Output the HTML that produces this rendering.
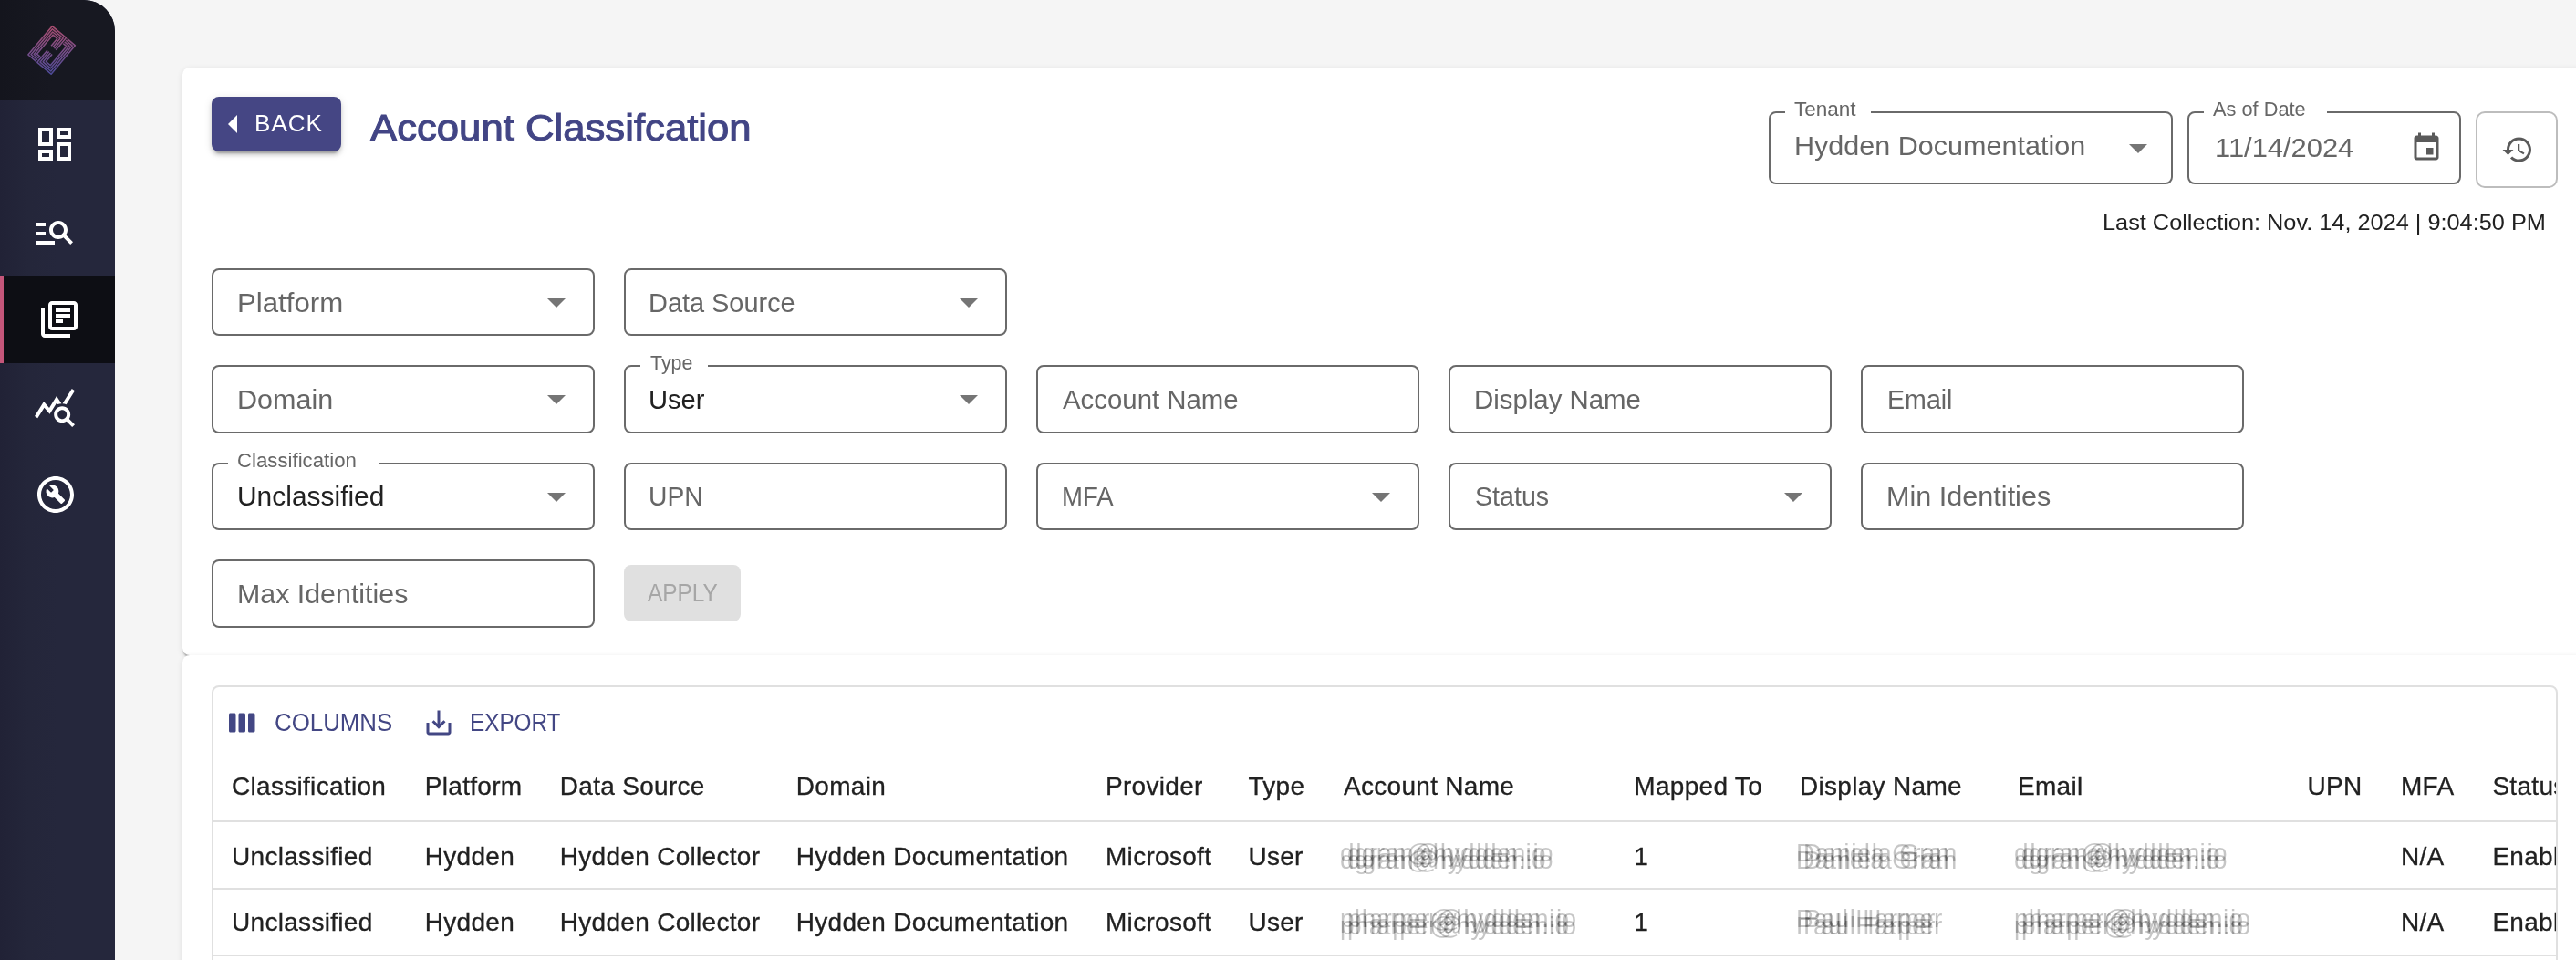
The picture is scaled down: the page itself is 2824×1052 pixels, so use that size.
<!DOCTYPE html>
<html lang="en">
<head>
<meta charset="utf-8">
<title>Account Classifcation</title>
<style>
*{box-sizing:border-box;margin:0;padding:0}
html,body{width:2824px;height:1052px;overflow:hidden;background:#f5f5f5;font-family:"Liberation Sans",sans-serif}
body{position:relative}
#wrap{position:absolute;left:0;top:0;width:2824px;height:1052px;will-change:transform}
.abs{position:absolute}
#side{position:absolute;left:0;top:0;width:126px;height:1052px;background:linear-gradient(90deg,#212236 0,#24263a 25%,#25273c 50%);border-top-right-radius:34px;overflow:hidden}
#logo{position:absolute;left:0;top:0;width:126px;height:110px;background:linear-gradient(90deg,#14151d 0,#171821 45%)}
#active{position:absolute;left:0;top:302px;width:126px;height:96px;background:#0d0e14;border-left:4px solid #c4567a}
.ico{position:absolute;width:48px;height:48px;fill:#fff}
.card{position:absolute;background:#fff;box-shadow:0 4px 2px -2px rgba(0,0,0,.2),0 2px 2px 0 rgba(0,0,0,.14),0 2px 6px 0 rgba(0,0,0,.12)}
#card1{left:200px;top:74px;width:2700px;height:644px;border-radius:8px}
#card2{left:200px;top:718px;width:2700px;height:400px;border-radius:8px}
.os{font-family:"Liberation Sans",sans-serif;white-space:pre;position:absolute;line-height:1;transform-origin:0 50%}
.fld{position:absolute;border:2px solid #6a6a6a;border-radius:8px}
.notch{position:absolute;top:-2px;height:2px;background:#fff}
.arr{position:absolute;width:48px;height:48px;fill:#757575}
#grid{position:absolute;left:232px;top:751px;width:2572px;height:400px;border:2px solid #e0e0e0;border-radius:8px;overflow:hidden}
.tc{position:absolute;font-size:28px;line-height:28px;color:#212121;letter-spacing:.3px;white-space:pre;-webkit-text-stroke:.3px #212121}
.hl{position:absolute;left:0;width:2572px;height:2px;background:#e0e0e0}
.blur{color:transparent;-webkit-text-stroke:0 transparent;text-shadow:-4px -4px 0 rgba(0,0,0,.225),4px -4px 0 rgba(0,0,0,.225),-4px 4px 0 rgba(0,0,0,.225),4px 4px 0 rgba(0,0,0,.225)}
</style>
</head>
<body>
<div id="wrap">
<div id="side">
<div id="logo"></div>
<div id="active"></div>
<svg class="abs" style="left:0;top:0" width="126" height="110" viewBox="0 0 126 110">
<defs><linearGradient id="lg" gradientUnits="userSpaceOnUse" x1="0" y1="0" x2="34.8" y2="41.4"><stop offset="0" stop-color="#cb587f"/><stop offset=".5" stop-color="#915a9f"/><stop offset="1" stop-color="#5755b2"/></linearGradient></defs>
<g transform="translate(57.1 27.9) rotate(40)" fill="none" stroke="url(#lg)" stroke-width="1.55" stroke-opacity=".82" stroke-linejoin="round">
<path d="M12.00 41.45 L0.55 41.45 L0.55 0.55 L20.45 0.55 L20.45 17.80"/>
<path d="M12.00 39.20 L2.80 39.20 L2.80 2.80 L18.20 2.80 L18.20 17.80"/>
<path d="M12.00 36.95 L5.05 36.95 L5.05 5.05 L15.95 5.05 L15.95 17.80"/>
<path d="M12.00 34.70 L7.30 34.70 L7.30 7.30 L13.70 7.30 L13.70 17.80"/>
<path d="M22.00 0.55 L33.45 0.55 L33.45 41.45 L13.55 41.45 L13.55 24.20"/>
<path d="M22.00 2.80 L31.20 2.80 L31.20 39.20 L15.80 39.20 L15.80 24.20"/>
<path d="M22.00 5.05 L28.95 5.05 L28.95 36.95 L18.05 36.95 L18.05 24.20"/>
<path d="M22.00 7.30 L26.70 7.30 L26.70 34.70 L20.30 34.70 L20.30 24.20"/>
</g></svg>
<svg class="ico" style="left:36px;top:134px" viewBox="0 0 24 24"><path d="M19 5v2h-4V5h4M9 5v6H5V5h4m10 8v6h-4v-6h4M9 17v2H5v-2h4M21 3h-8v6h8V3zM11 3H3v10h8V3zm10 8h-8v10h8V11zm-10 4H3v6h8v-6z"/></svg>
<svg class="ico" style="left:36px;top:230px" viewBox="0 0 24 24"><path d="M7 9H2V7h5v2zm0 3H2v2h5v-2zm13.59 7-3.83-3.83c-.8.52-1.74.83-2.76.83-2.76 0-5-2.24-5-5s2.24-5 5-5 5 2.24 5 5c0 1.02-.31 1.96-.83 2.75L22 17.59 20.59 19zM17 11c0-1.65-1.35-3-3-3s-3 1.35-3 3 1.35 3 3 3 3-1.35 3-3zM2 19h10v-2H2v2z"/></svg>
<svg class="ico" style="left:41px;top:326px" viewBox="0 0 24 24"><path d="M4 6H2v14c0 1.1.9 2 2 2h14v-2H4V6zm16-4H8c-1.1 0-2 .9-2 2v12c0 1.1.9 2 2 2h12c1.1 0 2-.9 2-2V4c0-1.1-.9-2-2-2zm0 14H8V4h12v12zM10 9h8v2h-8zm0 3h4v2h-4zm0-6h8v2h-8z"/></svg>
<svg class="ico" style="left:36px;top:422px" viewBox="0 0 24 24"><path d="M19.88 18.47c.44-.7.7-1.51.7-2.39 0-2.49-2.01-4.5-4.5-4.5s-4.5 2.01-4.5 4.5 2.01 4.5 4.49 4.5c.88 0 1.7-.26 2.39-.7L21.58 23 23 21.58l-3.12-3.11zm-3.8.11c-1.38 0-2.5-1.12-2.5-2.5s1.12-2.5 2.5-2.5 2.5 1.12 2.5 2.5-1.12 2.5-2.5 2.5zm-.36-8.5c-.74.02-1.45.18-2.1.45l-.55-.83-3.8 6.18-3.01-3.52-3.63 5.81L1 17l5-8 3 3.5L13 6l2.72 4.08zm2.59.5c-.64-.28-1.33-.45-2.05-.49L21.38 2 23 3.18l-4.69 7.4z"/></svg>
<svg class="ico" style="left:37px;top:518px" viewBox="0 0 24 24"><path d="M12 2C6.48 2 2 6.48 2 12s4.48 10 10 10 10-4.48 10-10S17.52 2 12 2zm0 18c-4.41 0-8-3.59-8-8s3.59-8 8-8 8 3.59 8 8-3.59 8-8 8zM13.49 11.38c.43-1.22.17-2.64-.81-3.62-1.11-1.11-2.79-1.3-4.1-.59l2.35 2.35-1.41 1.41-2.35-2.35c-.71 1.32-.52 2.99.59 4.1.98.98 2.4 1.24 3.62.81l3.41 3.41c.2.2.51.2.71 0l1.4-1.4c.2-.2.2-.51 0-.71l-3.41-3.41z"/></svg>
</div>
<div class="card" id="card1"></div>
<div class="card" id="card2"></div>
<!-- header -->
<div class="abs" id="back" style="left:232px;top:106px;width:142px;height:60px;border-radius:8px;background:#454684;box-shadow:0 6px 2px -4px rgba(0,0,0,.2),0 4px 4px 0 rgba(0,0,0,.14),0 2px 10px 0 rgba(0,0,0,.12)">
<svg class="abs" style="left:0;top:6px;fill:#fff" width="48" height="48" viewBox="0 0 24 24"><path d="M14 7l-5 5 5 5V7z"/></svg>
<span class="os" style="left:47px;top:16px;font-size:26px;color:#fff;letter-spacing:1.05px">BACK</span>
</div>
<div class="fld" style="left:1939px;top:122px;width:443px;height:80px"><i class="notch" style="left:16.0px;width:94.0px"></i><svg class="arr" style="left:379px;top:14px" viewBox="0 0 24 24"><path d="M7 10l5 5 5-5z"/></svg></div>
<div class="fld" style="left:2398px;top:122px;width:300px;height:80px"><i class="notch" style="left:15.6px;width:135.6px"></i><svg class="abs" style="left:242px;top:20px;fill:#5a5a5a" width="36" height="36" viewBox="0 0 24 24"><path d="M17 12h-5v5h5v-5zM16 1v2H8V1H6v2H5c-1.11 0-1.99.9-1.99 2L3 19c0 1.1.89 2 2 2h14c1.1 0 2-.9 2-2V5c0-1.1-.9-2-2-2h-1V1h-2zm3 18H5V8h14v11z"/></svg></div>
<div class="abs" style="left:2714px;top:122px;width:90px;height:84px;border:2px solid #bdbdbd;border-radius:10px">
<svg class="abs" style="left:25.5px;top:22px;fill:#5a5a5a" width="36" height="36" viewBox="0 0 24 24"><path d="M13 3c-4.97 0-9 4.03-9 9H1l3.89 3.89.07.14L9 12H6c0-3.87 3.13-7 7-7s7 3.13 7 7-3.13 7-7 7c-1.93 0-3.68-.79-4.94-2.06l-1.42 1.42C8.27 19.99 10.51 21 13 21c4.97 0 9-4.03 9-9s-4.03-9-9-9zm-1 5v5l4.28 2.54.72-1.21-3.5-2.08V8H12z"/></svg>
</div>
<!-- filters -->
<div class="fld" style="left:232px;top:294px;width:420px;height:74px"><svg class="arr" style="left:352px;top:11px" viewBox="0 0 24 24"><path d="M7 10l5 5 5-5z"/></svg></div>
<div class="fld" style="left:684px;top:294px;width:420px;height:74px"><svg class="arr" style="left:352px;top:11px" viewBox="0 0 24 24"><path d="M7 10l5 5 5-5z"/></svg></div>
<div class="fld" style="left:232px;top:400px;width:420px;height:75px"><svg class="arr" style="left:352px;top:11px" viewBox="0 0 24 24"><path d="M7 10l5 5 5-5z"/></svg></div>
<div class="fld" style="left:684px;top:400px;width:420px;height:75px"><i class="notch" style="left:15.6px;width:74.0px"></i><svg class="arr" style="left:352px;top:11px" viewBox="0 0 24 24"><path d="M7 10l5 5 5-5z"/></svg></div>
<div class="fld" style="left:1136px;top:400px;width:420px;height:75px"></div>
<div class="fld" style="left:1588px;top:400px;width:420px;height:75px"></div>
<div class="fld" style="left:2040px;top:400px;width:420px;height:75px"></div>
<div class="fld" style="left:232px;top:507px;width:420px;height:74px"><i class="notch" style="left:15.9px;width:166.1px"></i><svg class="arr" style="left:352px;top:11px" viewBox="0 0 24 24"><path d="M7 10l5 5 5-5z"/></svg></div>
<div class="fld" style="left:684px;top:507px;width:420px;height:74px"></div>
<div class="fld" style="left:1136px;top:507px;width:420px;height:74px"><svg class="arr" style="left:352px;top:11px" viewBox="0 0 24 24"><path d="M7 10l5 5 5-5z"/></svg></div>
<div class="fld" style="left:1588px;top:507px;width:420px;height:74px"><svg class="arr" style="left:352px;top:11px" viewBox="0 0 24 24"><path d="M7 10l5 5 5-5z"/></svg></div>
<div class="fld" style="left:2040px;top:507px;width:420px;height:74px"></div>
<div class="fld" style="left:232px;top:613px;width:420px;height:74.5px"></div>
<div class="abs" id="apply" style="left:684px;top:619px;width:128px;height:62px;border-radius:8px;background:#e0e0e0"></div>
<!-- grid -->
<div id="grid">
<svg class="abs" style="left:14px;top:21px;fill:#434784" width="36" height="36" viewBox="0 0 24 24"><path d="M6 5H3c-.55 0-1 .45-1 1v12c0 .55.45 1 1 1h3c.55 0 1-.45 1-1V6c0-.55-.45-1-1-1zm14 0h-3c-.55 0-1 .45-1 1v12c0 .55.45 1 1 1h3c.55 0 1-.45 1-1V6c0-.55-.45-1-1-1zm-7 0h-3c-.55 0-1 .45-1 1v12c0 .55.45 1 1 1h3c.55 0 1-.45 1-1V6c0-.55-.45-1-1-1z"/></svg>
<svg class="abs" style="left:229px;top:21px;fill:#434784" width="36" height="36" viewBox="0 0 24 24"><path d="M19 12v7H5v-7H3v7c0 1.1.9 2 2 2h14c1.1 0 2-.9 2-2v-7h-2zm-6 .67l2.590-2.580L17 11.500l-5 5-5-5 1.410-1.410L11 12.670V3h2z"/></svg>
<span class="tc" style="left:20.0px;top:95.0px">Classification</span><span class="tc" style="left:231.8px;top:95.0px">Platform</span><span class="tc" style="left:379.8px;top:95.0px">Data Source</span><span class="tc" style="left:638.8px;top:95.0px">Domain</span><span class="tc" style="left:978.0px;top:95.0px">Provider</span><span class="tc" style="left:1134.4px;top:95.0px">Type</span><span class="tc" style="left:1239.0px;top:95.0px">Account Name</span><span class="tc" style="left:1557.3px;top:95.0px">Mapped To</span><span class="tc" style="left:1739.0px;top:95.0px">Display Name</span><span class="tc" style="left:1978.0px;top:95.0px">Email</span><span class="tc" style="left:2295.5px;top:95.0px">UPN</span><span class="tc" style="left:2398.0px;top:95.0px">MFA</span><span class="tc" style="left:2498.4px;top:95.0px">Status</span>
<div class="hl" style="top:146px"></div>
<span class="tc" style="left:20.0px;top:172.3px">Unclassified</span><span class="tc" style="left:231.8px;top:172.3px">Hydden</span><span class="tc" style="left:379.8px;top:172.3px">Hydden Collector</span><span class="tc" style="left:638.8px;top:172.3px">Hydden Documentation</span><span class="tc" style="left:978.0px;top:172.3px">Microsoft</span><span class="tc" style="left:1134.4px;top:172.3px">User</span><span class="tc blur" style="left:1239.0px;top:172.3px">dgran@hydden.io</span><span class="tc" style="left:1557.3px;top:172.3px">1</span><span class="tc blur" style="left:1739.0px;top:172.3px">Daniela Gran</span><span class="tc blur" style="left:1978.0px;top:172.3px">dgran@hydden.io</span><span class="tc" style="left:2398.0px;top:172.3px">N/A</span><span class="tc" style="left:2498.4px;top:172.3px">Enabled</span>
<div class="hl" style="top:220px"></div>
<span class="tc" style="left:20.0px;top:244.0px">Unclassified</span><span class="tc" style="left:231.8px;top:244.0px">Hydden</span><span class="tc" style="left:379.8px;top:244.0px">Hydden Collector</span><span class="tc" style="left:638.8px;top:244.0px">Hydden Documentation</span><span class="tc" style="left:978.0px;top:244.0px">Microsoft</span><span class="tc" style="left:1134.4px;top:244.0px">User</span><span class="tc blur" style="left:1239.0px;top:244.0px">pharper@hydden.io</span><span class="tc" style="left:1557.3px;top:244.0px">1</span><span class="tc blur" style="left:1739.0px;top:244.0px">Paul Harper</span><span class="tc blur" style="left:1978.0px;top:244.0px">pharper@hydden.io</span><span class="tc" style="left:2398.0px;top:244.0px">N/A</span><span class="tc" style="left:2498.4px;top:244.0px">Enabled</span>
<div class="hl" style="top:293px"></div>
</div>
<!-- text -->
<span class="os" style="left:405.70px;top:119.74px;font-size:40px;color:#424585;transform:scaleX(1.0921);-webkit-text-stroke:1px #424585;">Account Classifcation</span>
<span class="os" style="left:1967.00px;top:109.32px;font-size:21.6px;color:#666;transform:scaleX(1.0423);">Tenant</span>
<span class="os" style="left:1966.88px;top:146.47px;font-size:28.8px;color:#666;transform:scaleX(1.0606);">Hydden Documentation</span>
<span class="os" style="left:2426.30px;top:109.32px;font-size:21.6px;color:#666;transform:scaleX(1.0090);">As of Date</span>
<span class="os" style="left:2427.56px;top:148.32px;font-size:28.8px;color:#666;transform:scaleX(1.0723);">11/14/2024</span>
<span class="os" style="left:2304.85px;top:232.44px;font-size:24.7px;color:#212121;transform:scaleX(1.0252);">Last Collection: Nov. 14, 2024 | 9:04:50 PM</span>
<span class="os" style="left:259.93px;top:317.82px;font-size:28.8px;color:#666;transform:scaleX(1.0835);">Platform</span>
<span class="os" style="left:711.39px;top:317.82px;font-size:28.8px;color:#666;transform:scaleX(1.0038);">Data Source</span>
<span class="os" style="left:259.98px;top:424.22px;font-size:28.8px;color:#666;transform:scaleX(1.0600);">Domain</span>
<span class="os" style="left:711.38px;top:424.22px;font-size:28.8px;color:#212121;transform:scaleX(1.0121);">User</span>
<span class="os" style="left:1165.30px;top:424.22px;font-size:28.8px;color:#666;transform:scaleX(1.0202);">Account Name</span>
<span class="os" style="left:1616.36px;top:424.22px;font-size:28.8px;color:#666;transform:scaleX(1.0205);">Display Name</span>
<span class="os" style="left:2068.91px;top:424.22px;font-size:28.8px;color:#666;transform:scaleX(0.9926);">Email</span>
<span class="os" style="left:259.72px;top:529.92px;font-size:28.8px;color:#212121;transform:scaleX(1.0397);">Unclassified</span>
<span class="os" style="left:711.44px;top:529.92px;font-size:28.8px;color:#666;transform:scaleX(0.9807);">UPN</span>
<span class="os" style="left:1163.89px;top:529.92px;font-size:28.8px;color:#666;transform:scaleX(0.9561);">MFA</span>
<span class="os" style="left:1616.71px;top:529.92px;font-size:28.8px;color:#666;transform:scaleX(0.9938);">Status</span>
<span class="os" style="left:2067.98px;top:529.92px;font-size:28.8px;color:#666;transform:scaleX(1.0623);">Min Identities</span>
<span class="os" style="left:259.69px;top:637.32px;font-size:28.8px;color:#666;transform:scaleX(1.0543);">Max Identities</span>
<span class="os" style="left:712.70px;top:387.22px;font-size:21.6px;color:#666;transform:scaleX(0.9913);">Type</span>
<span class="os" style="left:260.07px;top:494.42px;font-size:21.6px;color:#666;transform:scaleX(1.0288);">Classification</span>
<span class="os" style="left:709.70px;top:636.91px;font-size:26.8px;color:#a6a6a6;transform:scaleX(0.9107);">APPLY</span>
<span class="os" style="left:300.84px;top:778.61px;font-size:26.8px;color:#434784;transform:scaleX(0.9644);">COLUMNS</span>
<span class="os" style="left:514.89px;top:778.61px;font-size:26.8px;color:#434784;transform:scaleX(0.9065);">EXPORT</span>
</div>
</body>
</html>
